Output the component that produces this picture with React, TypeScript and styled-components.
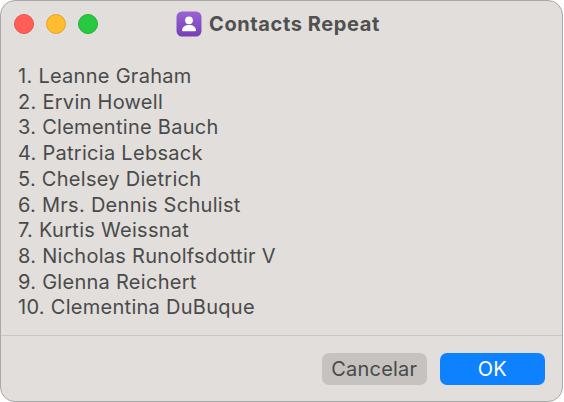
import React from "react";
import styled, { createGlobalStyle } from "styled-components";

const Global = createGlobalStyle`
  html, body { margin: 0; padding: 0; background: #ffffff; }
  #root { width: 564px; height: 402px; overflow: hidden; }
`;

const Win = styled.div`
  box-sizing: border-box;
  width: 563px;
  height: 401.5px;
  display: flex;
  flex-direction: column;
  background: #e1dedb;
  border: 1.5px solid #a8a8a8;
  border-radius: 15px;
  font-family: Inter, "Liberation Sans", sans-serif;
  color: #4a4a4a;
  overflow: hidden;
`;

const TitleBar = styled.div`
  display: flex;
  align-items: center;
  height: 46px;
  padding: 0 13px;
  flex: none;
  position: relative;
`;

const Lights = styled.div`
  display: flex;
  gap: 12px;
`;

const Light = styled.span<{ $c: string; $b: string }>`
  box-sizing: border-box;
  width: 20px;
  height: 20px;
  border-radius: 50%;
  background: ${(p) => p.$c};
  border: 0.5px solid ${(p) => p.$b};
`;

const Title = styled.div`
  position: absolute;
  left: 175px;
  top: 9px;
  display: flex;
  align-items: center;
  gap: 7px;
  font-size: 20px;
  font-weight: 700;
  letter-spacing: 0.6px;
  color: #505050;
  line-height: 26px;
`;

const TitleText = styled.span`
  padding-top: 1px;
`;

const AppIcon = styled.svg`
  width: 26px;
  height: 26px;
  display: block;
`;

const List = styled.ol`
  flex: 1;
  list-style: none;
  margin: 0;
  padding: 17px 0 0 17px;
  font-size: 20px;
  letter-spacing: 0.28px;
  line-height: 25.7px;
`;

const Footer = styled.div`
  flex: none;
  height: 65.5px;
  border-top: 1.5px solid #c9c6c3;
  display: flex;
  align-items: flex-start;
  justify-content: flex-end;
  gap: 12.5px;
  padding: 16.5px 17px 0 0;
  box-sizing: border-box;
`;

const Btn = styled.div<{ $primary?: boolean }>`
  width: 105.5px;
  height: 32px;
  border-radius: 7px;
  display: flex;
  align-items: center;
  justify-content: center;
  font-size: 20px;
  letter-spacing: 0.2px;
  background: ${(p) => (p.$primary ? "#0e81ff" : "#c5c2bf")};
  color: ${(p) => (p.$primary ? "#ffffff" : "#4a4a4a")};
`;

const names = [
  "Leanne Graham",
  "Ervin Howell",
  "Clementine Bauch",
  "Patricia Lebsack",
  "Chelsey Dietrich",
  "Mrs. Dennis Schulist",
  "Kurtis Weissnat",
  "Nicholas Runolfsdottir V",
  "Glenna Reichert",
  "Clementina DuBuque",
];

export default function App() {
  return (
    <>
      <Global />
      <Win>
        <TitleBar>
          <Lights>
            <Light $c="#ff5f57" $b="#e5534d" />
            <Light $c="#febc2e" $b="#e0a32a" />
            <Light $c="#28c840" $b="#24b03a" />
          </Lights>
          <Title>
            <AppIcon viewBox="0 0 26 26">
              <defs>
                <linearGradient id="g" x1="0" y1="0" x2="0" y2="1">
                  <stop offset="0" stopColor="#9a63d6" />
                  <stop offset="1" stopColor="#7440b4" />
                </linearGradient>
              </defs>
              <rect x="0.5" y="0.5" width="25" height="25" rx="5.5" fill="url(#g)" />
              <circle cx="13" cy="9.3" r="3.9" fill="#fff" />
              <path d="M6 19.5c0-3.6 3-5.6 7-5.6s7 2 7 5.6c0 .5-.4.8-.9.8H6.9c-.5 0-.9-.3-.9-.8z" fill="#fff" />
            </AppIcon>
            <TitleText>Contacts Repeat</TitleText>
          </Title>
        </TitleBar>
        <List>
          {names.map((n, i) => (
            <li key={n}>
              {i + 1}. {n}
            </li>
          ))}
        </List>
        <Footer>
          <Btn>Cancelar</Btn>
          <Btn $primary>OK</Btn>
        </Footer>
      </Win>
    </>
  );
}
